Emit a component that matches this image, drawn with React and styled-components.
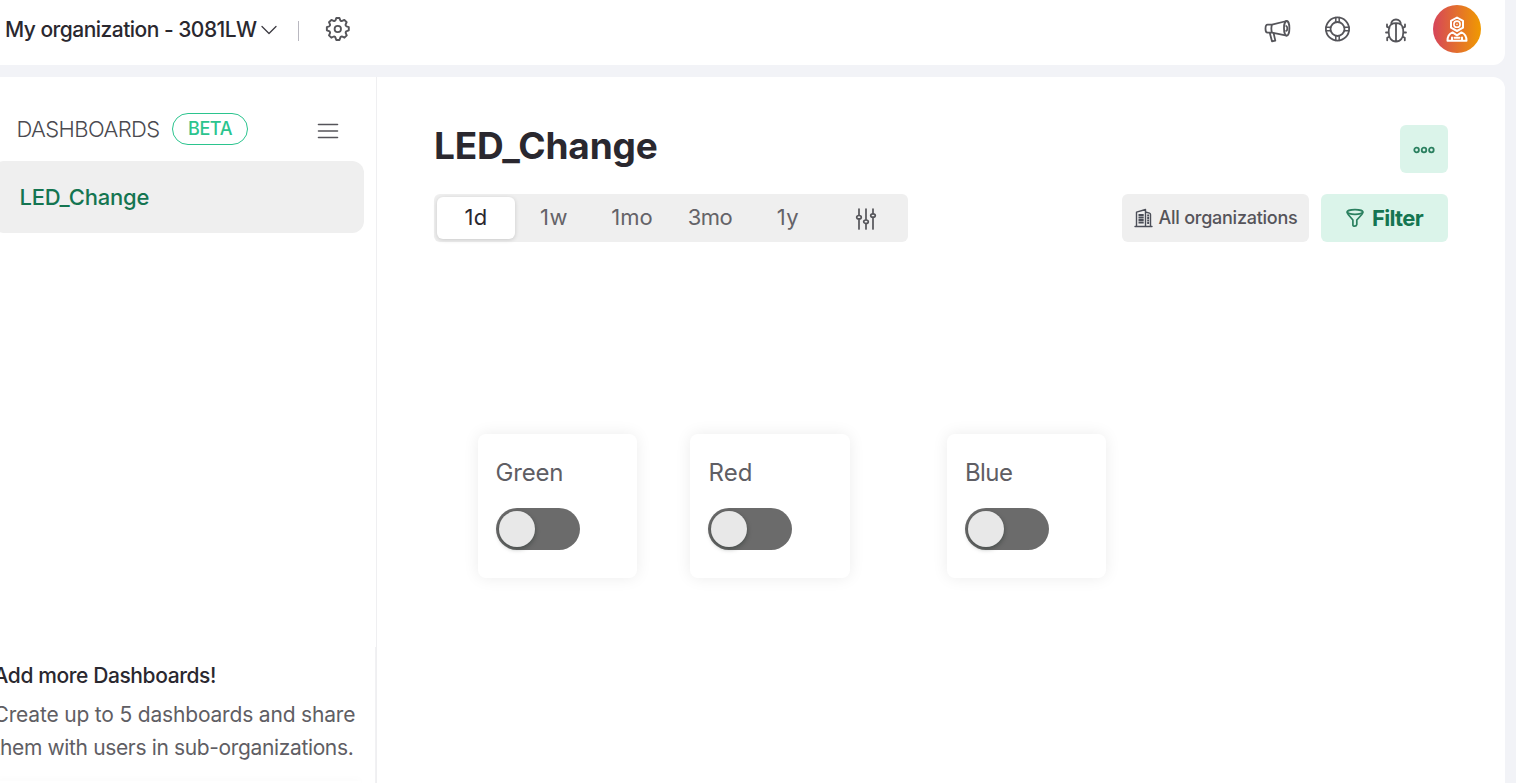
import React from 'react';
import styled, { createGlobalStyle } from 'styled-components';

const GlobalStyle = createGlobalStyle`
  * { box-sizing: border-box; }
  body {
    margin: 0;
    overflow: hidden;
    background: #f2f3f7;
    font-family: Inter, "Liberation Sans", sans-serif;
    color: #2a282f;
  }
  h1, h2, p { margin: 0; }
  button { border: 0; padding: 0; font-family: inherit; }
  svg { display: block; flex: none; }
`;

const Page = styled.div`
  width: 1505px;
  height: 783px;
  display: flex;
  flex-direction: column;
  gap: 12px;
  overflow: hidden;
`;

const Header = styled.header`
  height: 65px;
  flex: none;
  display: flex;
  align-items: flex-start;
  justify-content: space-between;
  padding: 5px 24px 0 5px;
  background: #fff;
  border-radius: 0 0 12px 0;
`;

const HeaderGroup = styled.div`
  height: 48px;
  display: flex;
  align-items: center;
`;

const Text = styled.span`
  font-size: ${(p) => p.$size}px;
  font-weight: ${(p) => p.$weight || 400};
  letter-spacing: ${(p) => p.$track || 0}px;
  line-height: ${(p) => p.$line || 32}px;
  color: ${(p) => p.$color || '#2a282f'};
  white-space: nowrap;
`;

const OrgSwitch = styled.div`
  width: 272px;
  margin-top: 2px;
  display: flex;
  align-items: center;
  justify-content: space-between;
`;

const Separator = styled.span`
  width: 1px;
  height: 20px;
  margin: 3px 26px 0 21px;
  background: #b9b8c0;
`;

const IconSlot = styled.span`
  display: block;
  padding-top: ${(p) => p.$drop || 0}px;
`;

const HeaderIcons = styled(HeaderGroup)`
  gap: 34px;
`;

const Avatar = styled.div`
  width: 48px;
  height: 48px;
  margin-left: -8px;
  border-radius: 50%;
  display: grid;
  place-items: center;
  background: linear-gradient(90deg, #d6455a, #f09a00);
`;

const Body = styled.div`
  flex: 1;
  min-height: 0;
  display: flex;
  background: #fff;
  border-radius: 0 12px 0 0;
`;

const Sidebar = styled.aside`
  width: 377px;
  display: flex;
  flex-direction: column;
  justify-content: space-between;
  border-right: 1px solid #efeff1;
`;

const SidebarHead = styled.div`
  height: 84px;
  padding: 36px 37px 0 16.5px;
  display: flex;
  align-items: flex-start;
  justify-content: space-between;
`;

const TitleGroup = styled.div`
  display: flex;
`;

const HeadingSlot = styled.div`
  width: 155.5px;
`;

const Beta = styled.div`
  width: 76px;
  height: 32px;
  display: flex;
  align-items: center;
  justify-content: center;
  border: 1px solid #2bc48e;
  border-radius: 16px;
`;

const MenuButton = styled.div`
  padding-top: 10px;
`;

const SidebarItem = styled.div`
  width: 372px;
  height: 72px;
  margin-left: -8px;
  padding-left: 27.5px;
  display: flex;
  align-items: center;
  background: #efefef;
  border-radius: 12px;
`;

const Promo = styled.div`
  height: 136px;
  margin-left: -8px;
  padding: 13px 0 0 1.5px;
  display: flex;
  flex-direction: column;
  border-right: 1px solid #f1f1f3;
`;

const PromoBody = styled.p`
  display: flex;
  flex-direction: column;
  margin-top: 6px;
`;

const PromoCard = styled.div`
  width: 367px;
  height: 20px;
  margin-top: 17px;
  border-radius: 12px;
  box-shadow: 0 0 8px rgba(60, 30, 10, 0.06);
`;

const Main = styled.main`
  flex: 1;
  padding: 48px 57px 0;
`;

const Row = styled.div`
  display: flex;
  justify-content: space-between;
`;

const MoreButton = styled.button`
  width: 48px;
  height: 48px;
  padding-top: 2px;
  display: grid;
  place-items: center;
  background: #dbf4ea;
  border-radius: 6px;
`;

const Controls = styled(Row)`
  margin-top: 21px;
`;

const Ranges = styled.div`
  width: 474px;
  height: 48px;
  padding: 3px;
  display: flex;
  background: #efefef;
  border-radius: 6px;
`;

const Range = styled.button`
  width: 78px;
  height: 42px;
  padding-bottom: 2px;
  display: flex;
  align-items: center;
  justify-content: center;
  border-radius: 6px;
  background: ${(p) => (p.$active ? '#fff' : 'transparent')};
  box-shadow: ${(p) => (p.$active ? '0 1px 4px rgba(0,0,0,.16)' : 'none')};
`;

const Actions = styled.div`
  display: flex;
  gap: 12px;
`;

const ActionButton = styled.button`
  width: ${(p) => p.$width}px;
  height: 48px;
  display: flex;
  align-items: center;
  justify-content: center;
  gap: ${(p) => p.$gap}px;
  background: ${(p) => p.$bg};
  border-radius: 6px;
`;

const Widgets = styled.section`
  display: flex;
  padding: 192px 0 0 43.5px;
`;

const Widget = styled.article`
  width: 159.3px;
  height: 144px;
  margin-right: ${(p) => p.$after}px;
  padding: 23px 18px;
  border-radius: 8px;
  background: #fff;
  box-shadow: 0 0 16px rgba(0, 0, 0, 0.08);
`;

const Toggle = styled.div`
  width: 84px;
  height: 42px;
  margin-top: 19px;
  padding: 3px;
  border-radius: 21px;
  background: #6b6b6b;
`;

const Knob = styled.div`
  width: 36px;
  height: 36px;
  border-radius: 50%;
  background: #e8e8e8;
  box-shadow: 0 2px 5px rgba(0, 20, 15, 0.35);
`;

const Icon = ({ w, h = w, box = `0 0 ${w} ${h}`, color = '#55555a', stroke = 1.8, children }) => (
  <svg width={w} height={h} viewBox={box} fill="none" stroke={color} strokeWidth={stroke} strokeLinecap="round" strokeLinejoin="round">
    {children}
  </svg>
);

const Gear = () => (
  <Icon w={26}>
    <path d="M10.8 3.2 11.5 1.3h3l.7 1.900c.3.800 1.100 1.100 1.900.800l2-1 2.200 2.200-.9 1.900c-.4.800 0 1.700.8 2l2.100.7v3.100l-2 .8c-.9.300-1.200 1.200-.8 2l.9 1.900-2.200 2.200-1.900-.9c-.8-.4-1.700 0-2 .8l-.8 2.300h-3l-.8-2.300c-.3-.8-1.200-1.200-2-.8l-1.900.9-2.200-2.200.9-1.900c.4-.8 0-1.700-.8-2l-2.100-.8V9.800l2.100-.7c.8-.3 1.200-1.200.8-2l-.9-1.900L6.900 3l2 1c.8.300 1.600 0 1.900-.8Z" transform="translate(-.9 .7) scale(1.060)" />
    <circle cx="12.800" cy="13" r="3.200" />
  </Icon>
);

const Megaphone = () => (
  <Icon w={27} h={25}>
    <ellipse cx="22.700" cy="10.300" rx="2.700" ry="7.300" />
    <path d="M22.700 3 8 6.600H3.600C2.300 6.600 1.500 8.300 1.500 10.700s.8 4 2.100 4H8l14.700 2.900M8 6.600c-.8 2.300-.8 5.500 0 8.100M5.800 15l2.200 8.300 3.300-.7-1.700-7.500M22.200 8c1.500.6 1.500 4.200 0 4.800" />
  </Icon>
);

const LifeRing = () => (
  <Icon w={26}>
    <circle cx="12.500" cy="13" r="11.600" />
    <circle cx="12.500" cy="13" r="7" />
    <path d="M10.800 1.500v4.700M14.200 1.500v4.700M10.800 19.800v4.700M14.200 19.800v4.700M1 11.300h4.700M1 14.700h4.700M19.300 11.300h4.700M19.300 14.700h4.700" strokeWidth="1.500" />
  </Icon>
);

const Bug = () => (
  <Icon w={22} h={26}>
    <path d="M6.200 7.500C6 4.500 8 2.500 11 2.500s5 2 4.800 5M11 7v17.300M6.200 7.400C7.400 6.600 9 6.200 11 6.200s3.600.4 4.800 1.200c1.800 1.500 2.500 4 2.500 7.600 0 5.700-2.700 9.500-7.300 9.500S3.700 20.700 3.700 15c0-3.600.7-6.100 2.500-7.600ZM4.500 10.800 2 9.800V7.500M17.500 10.800l2.500-1V7.500M3.700 15.500H1M18.300 15.500H21M4.500 19.600 2.200 20.800v2.500M17.500 19.600l2.300 1.200v2.500" />
  </Icon>
);

const Person = () => (
  <Icon w={24} h={28} color="#fff" stroke={2}>
    <path d="m12 2.500 6 3.400v6.800L12 16l-6-3.300V5.900Z" />
    <circle cx="12" cy="9.200" r="3.100" strokeWidth="1.600" />
    <circle cx="12" cy="9.200" r=".8" fill="#fff" stroke="none" />
    <path d="M7.500 17.400C4 18.800 2.500 21 2.500 25.700h19c0-4.700-1.500-6.900-5-8.300L12 20.300ZM7 25v-2.500M17 25v-2.500M9.500 22.700h5" />
  </Icon>
);

const Sliders = () => (
  <Icon w={22} h={24} stroke={1.7}>
    <path d="M4 2v6M4 12.200V22M11 2v10.500M11 17v5M18 2v4.500M18 10.500V22" />
    <ellipse cx="4" cy="10.200" rx="2.300" ry="1.700" />
    <ellipse cx="11" cy="14.700" rx="2.300" ry="1.700" />
    <ellipse cx="18" cy="8.500" rx="2.300" ry="1.700" />
  </Icon>
);

const Building = () => (
  <Icon w={19} h={20} color="#4b4e58" stroke={1.4}>
    <path d="M1 18.500h17M2.500 18V4.200L11.500 1.500V18M11.500 4l4 1.200c.7.200 1 .6 1 1.300V18" />
    <path d="M4.500 7h5.200M4.500 9.500h5.200M4.500 12h5.200M4.500 14.500h5.200M13.200 7.500h1.900M13.200 10h1.900M13.200 12.500h1.900M13.200 15h1.900" strokeWidth="1.800" strokeLinecap="butt" />
  </Icon>
);

const Funnel = () => (
  <Icon w={18} h={20} color="#2b8060" stroke={1.7}>
    <ellipse cx="9" cy="4" rx="7.800" ry="2.300" />
    <path d="M1.200 4c0 1.200.4 1.800 1 2.500l4.700 5.500v5.200c0 1.200 3.400 1.600 3.900-.7V12l5-5.500c.6-.7 1-1.300 1-2.500" />
  </Icon>
);

const ranges = [
  { label: '1d', track: 0.4 },
  { label: '1w', track: 0.4 },
  { label: '1mo', track: 0 },
  { label: '3mo', track: -0.6 },
  { label: '1y', track: 0.6 },
];

const widgets = [
  { name: 'Green', track: -0.2, after: 53.7 },
  { name: 'Red', track: 0.1, after: 97.2 },
  { name: 'Blue', track: -0.6, after: 0 },
];

export default function App() {
  return (
    <>
      <GlobalStyle />
      <Page>
        <Header>
          <HeaderGroup>
            <OrgSwitch>
              <Text $size={21} $weight={500} $track={-0.52}>My organization - 3081LW</Text>
              <Icon w={16} h={10} stroke={1.3} color="#3d3b42"><path d="m1 1.500 7 7 7-7" /></Icon>
            </OrgSwitch>
            <Separator />
            <Gear />
          </HeaderGroup>
          <HeaderIcons>
            <IconSlot $drop={3}><Megaphone /></IconSlot>
            <LifeRing />
            <IconSlot $drop={1}><Bug /></IconSlot>
            <Avatar><Person /></Avatar>
          </HeaderIcons>
        </Header>
        <Body>
          <Sidebar>
            <div>
              <SidebarHead>
                <TitleGroup>
                  <HeadingSlot>
                    <Text as="h2" $size={22} $weight={300} $track={-0.6} $color="#4b4a50">DASHBOARDS</Text>
                  </HeadingSlot>
                  <Beta><Text $size={18} $weight={500} $track={-0.4} $color="#2bc48e">BETA</Text></Beta>
                </TitleGroup>
                <MenuButton>
                  <Icon w={22} h={16} stroke={1.6} color="#55545a"><path d="M1.500 1.500h19M1.500 8h19M1.500 14.500h19" /></Icon>
                </MenuButton>
              </SidebarHead>
              <SidebarItem><Text $size={22} $weight={500} $track={-0.2} $color="#147551">LED_Change</Text></SidebarItem>
            </div>
            <Promo>
              <Text as="h2" $size={21} $weight={500} $track={-0.4}>Add more Dashboards!</Text>
              <PromoBody>
                <Text $size={21} $line={33} $weight={400} $track={-0.18} $color="#5f5e64">Create up to 5 dashboards and share</Text>
                <Text $size={21} $line={33} $weight={400} $track={-0.36} $color="#5f5e64">them with users in sub-organizations.</Text>
              </PromoBody>
              <PromoCard />
            </Promo>
          </Sidebar>
          <Main>
            <Row>
              <Text as="h1" $size={37} $weight={700} $line={42} $track={-0.15}>LED_Change</Text>
              <MoreButton aria-label="More">
                <Icon w={23} h={8} color="#2b8060"><circle cx="3.600" cy="4" r="2.300" /><circle cx="11" cy="4" r="2.300" /><circle cx="18.400" cy="4" r="2.300" /></Icon>
              </MoreButton>
            </Row>
            <Controls>
              <Ranges>
                {ranges.map((r, i) => (
                  <Range key={r.label} $active={i === 0}>
                    <Text $size={22} $weight={400} $track={r.track} $color={i === 0 ? '#2a282f' : '#646368'}>{r.label}</Text>
                  </Range>
                ))}
                <Range aria-label="Custom range"><IconSlot $drop={4}><Sliders /></IconSlot></Range>
              </Ranges>
              <Actions>
                <ActionButton $width={187} $gap={6} $bg="#efefef">
                  <Building />
                  <Text $size={18} $weight={500} $track={-0.25} $color="#55545a">All organizations</Text>
                </ActionButton>
                <ActionButton $width={127} $gap={8} $bg="#dbf4ea">
                  <Funnel />
                  <Text $size={22} $weight={700} $track={-0.7} $color="#147551">Filter</Text>
                </ActionButton>
              </Actions>
            </Controls>
            <Widgets>
              {widgets.map((w) => (
                <Widget key={w.name} $after={w.after}>
                  <Text as="h2" $size={24} $weight={400} $track={w.track} $color="#5f5e64">{w.name}</Text>
                  <Toggle><Knob /></Toggle>
                </Widget>
              ))}
            </Widgets>
          </Main>
        </Body>
      </Page>
    </>
  );
}
